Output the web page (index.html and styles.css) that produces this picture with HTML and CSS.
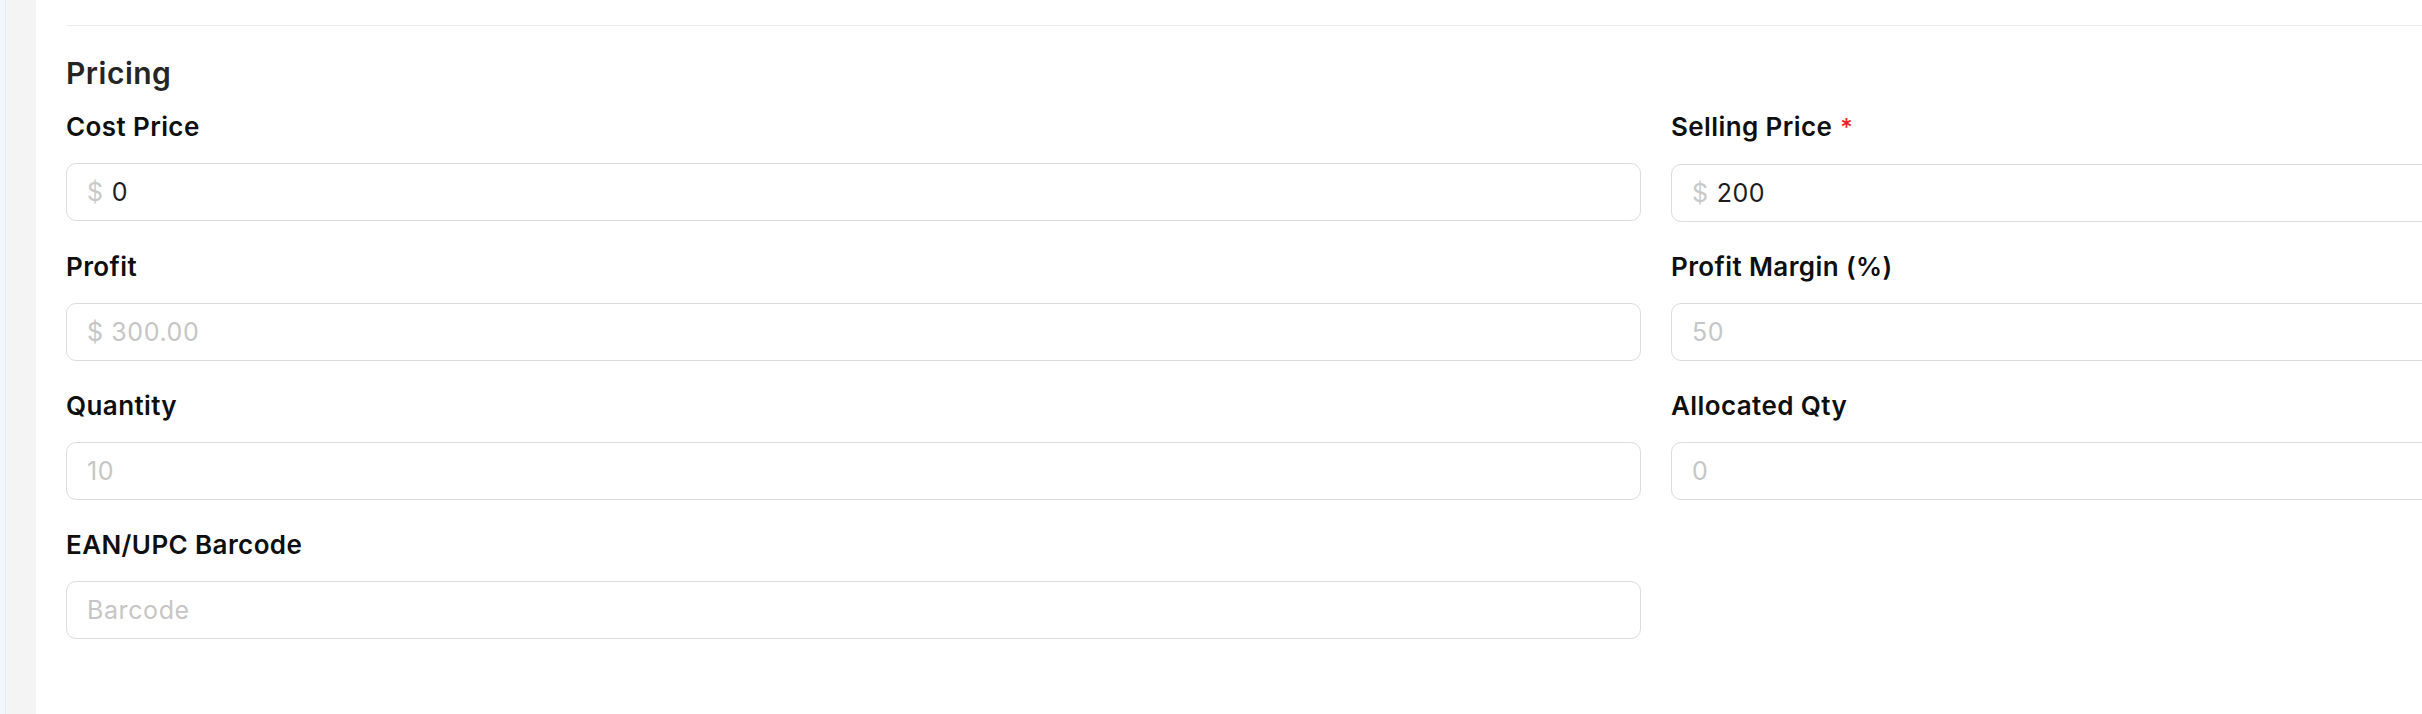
FILE: index.html
```html
<!DOCTYPE html>
<html lang="en">
<head>
<meta charset="utf-8">
<title>Pricing</title>
<link rel="stylesheet" href="styles.css">
</head>
<body>
<div class="app">
  <div class="rail"></div>
  <div class="gutter"></div>
  <main class="main">
    <div class="divider"></div>
    <section class="section">
      <h2 class="section-title">Pricing</h2>
      <div class="grid">
        <div class="field">
          <label class="label">Cost Price</label>
          <div class="input"><span class="prefix">$</span><span class="value">0</span></div>
        </div>
        <div class="field">
          <label class="label">Selling Price<span class="req">*</span></label>
          <div class="input"><span class="prefix">$</span><span class="value">200</span></div>
        </div>
        <div class="field">
          <label class="label">Profit</label>
          <div class="input"><span class="muted">$ 300.00</span></div>
        </div>
        <div class="field">
          <label class="label">Profit Margin (%)</label>
          <div class="input"><span class="muted">50</span></div>
        </div>
        <div class="field">
          <label class="label">Quantity</label>
          <div class="input"><span class="muted">10</span></div>
        </div>
        <div class="field">
          <label class="label">Allocated Qty</label>
          <div class="input"><span class="muted">0</span></div>
        </div>
        <div class="field">
          <label class="label">EAN/UPC Barcode</label>
          <div class="input"><span class="muted">Barcode</span></div>
        </div>
      </div>
    </section>
  </main>
</div>
</body>
</html>
```

FILE: styles.css
```css
html, body {
  margin: 0;
  padding: 0;
  background: #ffffff;
  overflow: hidden;
}

body {
  font-family: "Inter", "Liberation Sans", sans-serif;
  color: #111111;
}

.app {
  display: flex;
  min-height: 714px;
  width: 3300px;
}

.rail {
  width: 5px;
  flex: none;
  background: #f3f6fd;
  border-right: 1px solid #e6ebf6;
}

.gutter {
  width: 30px;
  flex: none;
  background: #f4f4f4;
}

.main {
  flex: none;
  width: 3250px;
  padding-left: 30px;
  padding-top: 25px;
}

.divider {
  height: 1px;
  background: #ececec;
}

.section {
  padding-top: 27px;
}

.section-title {
  margin: 0 0 16px;
  font-size: 30px;
  line-height: 40px;
  font-weight: 600;
  color: #252525;
  letter-spacing: 0.5px;
}

.grid {
  display: grid;
  grid-template-columns: 1575px 1575px;
  column-gap: 30px;
  row-gap: 27px;
}

.field {
  display: flex;
  flex-direction: column;
  gap: 18px;
}

.label {
  font-size: 26px;
  line-height: 36px;
  font-weight: 600;
  color: #0f0f0f;
  letter-spacing: 0.4px;
}

.req {
  color: #ec1c24;
  font-size: 24px;
  font-weight: 500;
  margin-left: 8px;
}

.input {
  box-sizing: border-box;
  height: 58px;
  border: 1px solid #dcdcdc;
  border-radius: 10px;
  display: flex;
  align-items: center;
  padding-left: 20px;
  font-size: 25px;
  font-weight: 400;
  letter-spacing: 0.6px;
}

.prefix {
  color: #c9c9c9;
  margin-right: 8px;
}

.value {
  color: #1c1c1c;
}

.muted {
  color: #c6c6c6;
}
```
